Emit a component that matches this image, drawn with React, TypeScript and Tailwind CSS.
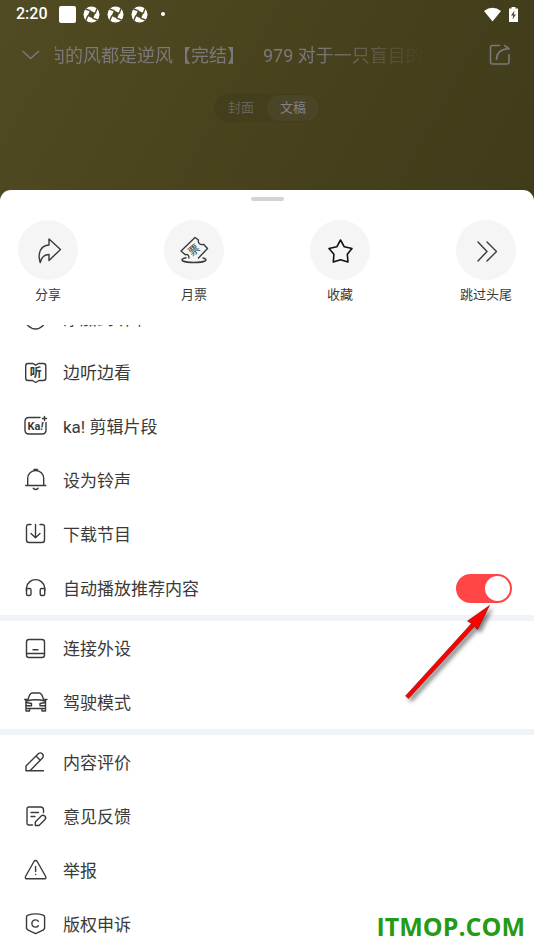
import { useState } from 'react';
import type { ReactNode } from 'react';

const Icon = ({ children, size = 24 }: { children: ReactNode; size?: number }) => (
  <svg
    width={size}
    height={size}
    viewBox={`0 0 ${size} ${size}`}
    fill="none"
    stroke="currentColor"
    strokeWidth="1.4"
    strokeLinecap="round"
    strokeLinejoin="round"
    className="shrink-0"
    aria-hidden="true"
  >
    {children}
  </svg>
);

const actions = [
  {
    label: '分享',
    icon: (
      <Icon size={32}>
        <path d="M17 5 28.500 15.500 17 26.500V20.500C12.500 20.500 9.500 23 8.200 28.500 5.500 20 8 11.500 17 11Z" />
      </Icon>
    ),
  },
  {
    label: '月票',
    icon: (
      <Icon size={32}>
        <path d="M11 24C11 21 9.500 20 7.300 20.700L3 17 17 3.500 20.500 6C19.500 9 22.500 11.500 25.500 10.300L29.500 14.500 20.500 24" />
        <path d="M8 23.700C4 24.500 3 26 5 27 9 29 23 29 27 27 29 26 28 24.700 25 24" />
        <text x="16" y="20" fontSize="11" textAnchor="middle" fill="currentColor" stroke="none" transform="rotate(-40 16 16)">票</text>
      </Icon>
    ),
  },
  {
    label: '收藏',
    icon: (
      <Icon size={32}>
        <path stroke="#111" strokeWidth="1.600" d="M16.500 6 20.300 12.800 28 14.500 23.300 20.300 24 28 16.500 25.700 9.300 28 9.900 20.300 5 14.500 12.800 12.800Z" />
      </Icon>
    ),
  },
  {
    label: '跳过头尾',
    icon: (
      <Icon size={32}>
        <path d="M8 8 17 17.500 8 27M17 8 26.500 17.500 17 27" />
      </Icon>
    ),
  },
];

const playItems = [
  {
    label: '添加到听单',
    icon: (
      <Icon>
        <circle cx="11.500" cy="13" r="10" />
        <path d="M11.500 9v8M7.500 13h8" />
      </Icon>
    ),
  },
  {
    label: '边听边看',
    icon: (
      <Icon>
        <path d="M9 3.500H4Q1.700 3.500 1.700 6V18Q1.700 20.500 4 20.500H8.500L11.700 22.500 15 20.500H19.500Q21.800 20.500 21.800 18V6Q21.800 3.500 19.500 3.500H14.500L11.700 5.200Z" />
        <text x="11.700" y="16.500" fontSize="12" textAnchor="middle" fill="currentColor" stroke="none" className="font-bold">听</text>
      </Icon>
    ),
  },
  {
    label: 'ka! 剪辑片段',
    icon: (
      <Icon>
        <path d="M16 3.500H5Q1 3.500 1 7.500V16Q1 20 5 20H18Q22 20 22 16V8.500" />
        <path d="M20.500 2.500v4M18.500 4.500h4" />
        <text x="11.500" y="16" fontSize="11" textAnchor="middle" fill="currentColor" stroke="none" className="font-bold">Ka<tspan fontStyle="italic">!</tspan></text>
      </Icon>
    ),
  },
  {
    label: '设为铃声',
    icon: (
      <Icon>
        <path d="M1.700 17.500H21.700M3.700 17.500V10.500A8 8 0 0 1 19.700 10.500V17.500M10 1.500H13.500M9.300 20.200Q11.700 22.800 14.100 20.200" />
      </Icon>
    ),
  },
  {
    label: '下载节目',
    icon: (
      <Icon>
        <path d="M7 2.500H5Q2.500 2.500 2.500 5V18Q2.500 20.500 5 20.500H18Q20.500 20.500 20.500 18V5Q20.500 2.500 18 2.500H16M11.500 2.500V15.500M7 11.500 11.500 15.700 16 11.500" />
      </Icon>
    ),
  },
];

const deviceItems = [
  {
    label: '连接外设',
    icon: (
      <Icon>
        <rect x="2.500" y="3.500" width="18" height="18" rx="2.500" />
        <path d="M2.500 17.500H20.500M9 13.800H14" />
      </Icon>
    ),
  },
  {
    label: '驾驶模式',
    icon: (
      <Icon>
        <path d="M0.700 9.500H3M20.500 9.500H23M4 9.500Q5.500 3.500 8 3H15.500Q18 3.500 19.500 9.500M2.500 11Q11.700 8.500 21 11M2 10.500V21H5.500V18.500H18V21H21.500V10.500M2 18.500H5.500M18 18.500H21.500" />
        <path d="M2 12.500 7.500 13.500V15.700H2M21.500 12.500 16 13.500V15.700H21.500" />
      </Icon>
    ),
  },
];

const feedbackItems = [
  {
    label: '内容评价',
    icon: (
      <Icon>
        <path d="M2 20.700H19.500M2 20.500V16L14.500 3.500Q16.500 2 18.500 4 20 6 18.500 8L6.500 20.200M12.500 6.500 15.500 9.500" />
      </Icon>
    ),
  },
  {
    label: '意见反馈',
    icon: (
      <Icon>
        <path d="M8.500 21H5Q3 21 3 19V5Q3 3 5 3H16.500Q19.500 3 19.500 6V8.500M7 8.500H14.500M7 12.500H11" />
        <path d="M11.300 21.500V18L17.500 11.800Q19 10.500 20.800 12 22.500 14 21 15.500L15 21.500Z" />
      </Icon>
    ),
  },
  {
    label: '举报',
    icon: (
      <Icon>
        <path d="M10 3.500Q11.600 1.500 13.200 3.500L21.700 18.500Q22.500 20.800 20 20.800H3.200Q.7 20.800 1.500 18.500Z" />
        <path d="M11.600 8.500V13.500M11.600 16.400V16.600" />
      </Icon>
    ),
  },
  {
    label: '版权申诉',
    icon: (
      <Icon>
        <path d="M2.500 5Q2.500 3.500 4 3.200 11.500 .5 19.200 3.200 20.600 3.500 20.600 5V16.500L19 18.200 11.600 21.700 4.200 18.200 2.500 16.500Z" />
        <path d="M14.300 9.300A3.600 3.600 0 1 0 14.300 13.700" />
      </Icon>
    ),
  },
];

const Shutter = () => (
  <svg width="17" height="17" viewBox="0 0 17 17" aria-hidden="true">
    <circle cx="8.500" cy="8.500" r="8" fill="#fff" />
    <path d="M7 4.500 12.500 7 10 12.500 4.500 10Z" fill="#4f4a21" />
    <path d="M7.500 4.800 2.500 3M12.200 7.500 14 2.500M9.500 12.200 14.500 14M4.800 9.500 3 14.500" stroke="#4f4a21" strokeWidth="1.400" />
  </svg>
);

const MenuRow = ({ icon, label }: { icon: ReactNode; label: string }) => (
  <li>
    <button type="button" className="flex h-[54px] w-full items-center gap-[15px] pl-6 text-left text-[17px]">
      {icon}
      <span className="pt-[3px]">{label}</span>
    </button>
  </li>
);

export default function App() {
  const [autoPlay, setAutoPlay] = useState(true);
  const [tab, setTab] = useState('文稿');

  return (
    <div className="relative flex h-screen flex-col overflow-hidden bg-linear-to-br from-[#504b22] to-[#403b19] to-60% font-[Roboto,'Noto_Sans_CJK_SC',sans-serif] text-[#3a3a3a]">
      {/* status bar */}
      <div className="flex h-7 shrink-0 items-center px-4 text-white">
        <span className="text-base font-medium">2:20</span>
        <div className="ml-[11px] flex items-center gap-[7px]">
          <span className="size-[17px] rounded-xs bg-white" />
          <Shutter />
          <Shutter />
          <Shutter />
          <span className="ml-1.5 size-1 rounded-full bg-white" />
        </div>
        <div className="ml-auto flex items-center gap-2">
          <svg width="17" height="15" viewBox="0 0 17 15" fill="#fff" aria-hidden="true">
            <path d="M8.500 14.500 0 4Q8.500-2.500 17 4Z" />
          </svg>
          <svg width="9" height="15" viewBox="0 0 9 15" aria-hidden="true">
            <path d="M0 1.500H2.500V0H6.500V1.500H9V15H0Z" fill="#fff" />
            <path d="M5.500 3.500 2 8.500H4.200L3.500 12.500 7 7.500H4.800Z" fill="#4a4520" />
          </svg>
        </div>
      </div>

      <header className="flex h-[54px] shrink-0 items-center pl-[21px] pr-[23px] text-[#7b787a]">
        <button type="button" aria-label="收起">
          <svg width="20" height="20" viewBox="0 0 20 20" fill="none" stroke="currentColor" strokeWidth="1.600" aria-hidden="true">
            <path d="M1.500 6 9.700 13.500 18 6" />
          </svg>
        </button>
        <div className="ml-[14px] mr-[62px] flex flex-1 overflow-hidden whitespace-nowrap mask-r-from-70% text-[18px]">
          <span className="-ml-2 shrink-0">向的风都是逆风【完结】</span>
          <span className="ml-[18px] shrink-0">979 对于一只盲目的鸟</span>
        </div>
        <button type="button" aria-label="分享节目">
          <svg width="22" height="22" viewBox="0 0 22 22" fill="none" stroke="currentColor" strokeWidth="1.600" strokeLinecap="round" strokeLinejoin="round" aria-hidden="true">
            <path d="M10.500 1.500H3.500Q1.500 1.500 1.500 3.500V18Q1.500 20 3.500 20H18Q20 20 20 18V10.500M7.500 15.500Q7.500 5.500 19.500 4.700M15.500 1.500 20 4.700" />
          </svg>
        </button>
      </header>

      <div className="mt-3 flex h-7 shrink-0 self-center rounded-full bg-[#433e1b] p-px text-[13px] text-[#68645b]">
        {['封面', '文稿'].map((name) => (
          <button
            key={name}
            type="button"
            onClick={() => setTab(name)}
            className={`w-[52px] rounded-full ${tab === name ? 'bg-[#4a4526] text-[#858288]' : ''}`}
          >
            {name}
          </button>
        ))}
      </div>

      <main className="mt-[68px] flex flex-1 flex-col rounded-t-[11px] bg-white">
        <div className="mt-[7px] h-1 w-[33px] shrink-0 self-center rounded-full bg-[#d3d3d3]" />

        <div className="mt-[19px] flex shrink-0 justify-between px-[18px] pb-5">
          {actions.map((a) => (
            <button key={a.label} type="button" className="flex w-[60px] flex-col items-center gap-[5px]">
              <span className="flex size-[60px] items-center justify-center rounded-full bg-[#f5f5f5]">{a.icon}</span>
              <span className="text-[13px] leading-5 whitespace-nowrap">{a.label}</span>
            </button>
          ))}
        </div>

        <div className="flex-1 overflow-hidden">
          <ul className="-mt-[34px]">
            {playItems.map((item) => (
              <MenuRow key={item.label} icon={item.icon} label={item.label} />
            ))}
            <li className="relative">
              <label className="flex h-[54px] items-center gap-[15px] pl-6 pr-[22px] text-[17px]">
                <Icon>
                  <path d="M2.500 15V11.500A9.200 9.200 0 0 1 20.700 11.500V15" />
                  <path d="M2.500 12.500H5.500Q7 12.500 7 14V18Q7 19.500 5.500 19.500H4Q2.500 19.500 2.500 18ZM20.700 12.500H17.700Q16.200 12.500 16.200 14V18Q16.200 19.500 17.700 19.500H19.200Q20.700 19.500 20.700 18Z" />
                </Icon>
                <span className="pt-[3px]">自动播放推荐内容</span>
                <input
                  type="checkbox"
                  role="switch"
                  checked={autoPlay}
                  onChange={(e) => setAutoPlay(e.target.checked)}
                  className="ml-auto flex h-[29px] w-14 appearance-none items-center rounded-full bg-gray-300 px-[2px] before:size-[25px] before:rounded-full before:bg-white checked:justify-end checked:bg-[#ff4545]"
                />
              </label>
              {/* pointer to the switch */}
              <svg width="100" height="110" viewBox="0 0 100 110" className="pointer-events-none absolute top-10 right-8 z-10 drop-shadow-[3px_3px_2px_rgba(0,0,0,0.5)]" aria-hidden="true">
                <path d="M3.500 95 69.500 22.500 65.500 20 87.500 4.500 75.500 28.500 72.500 25.500 6.500 97.500Z" fill="#f00" stroke="#7a1010" strokeWidth=".6" />
              </svg>
            </li>
          </ul>
          <ul className="border-t-6 border-[#f0f4f8]">
            {deviceItems.map((item) => (
              <MenuRow key={item.label} icon={item.icon} label={item.label} />
            ))}
          </ul>
          <ul className="border-t-6 border-[#f0f4f8]">
            {feedbackItems.map((item) => (
              <MenuRow key={item.label} icon={item.icon} label={item.label} />
            ))}
          </ul>
        </div>
      </main>

      <span className="absolute right-[9px] bottom-1.5 font-['Open_Sans',sans-serif] text-[25px] leading-9 font-bold text-[#259a14]">ITMOP.COM</span>
    </div>
  );
}
